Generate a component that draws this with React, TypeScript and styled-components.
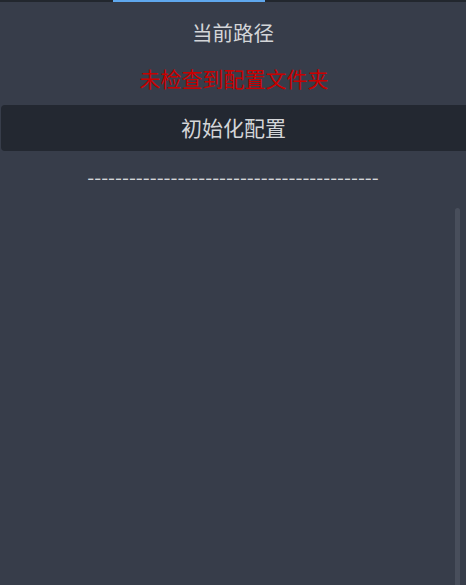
import React from "react";
import styled, { createGlobalStyle } from "styled-components";

const Global = createGlobalStyle`
  html, body { margin: 0; padding: 0; background: #373d4a; }
  body { font-family: "Noto Sans CJK SC", "Noto Sans", sans-serif; overflow: hidden; }
`;

const Page = styled.div`
  width: 466px;
  height: 585px;
  display: flex;
  flex-direction: column;
  background: #373d4a;
  position: relative;
  overflow: hidden;
`;

const TopStrip = styled.div`
  height: 2px;
  background: #22272e;
  display: flex;
  padding-left: 113px;
`;

const ActiveTab = styled.div`
  width: 152px;
  height: 2px;
  background: #5fa8ee;
`;

const Title = styled.div`
  margin-top: 17px;
  text-align: center;
  font-size: 20.5px;
  line-height: 26px;
  color: #d3d5d8;
`;

const Warning = styled.div`
  margin-top: 20px;
  padding-left: 2px;
  text-align: center;
  font-size: 21px;
  line-height: 26px;
  color: #c80000;
`;

const InitButton = styled.button`
  margin: 14px 0 0 1px;
  width: 470px;
  height: 46px;
  border: none;
  border-radius: 4px;
  background: #232831;
  color: #d3d5d8;
  font-family: inherit;
  font-size: 21px;
  line-height: 26px;
  padding: 0 5px 2px 0;
  text-align: center;
  box-sizing: border-box;
`;

const Divider = styled.div`
  margin-top: 13px;
  text-align: center;
  font-size: 20px;
  line-height: 26px;
  color: #d3d5d8;
`;

const ScrollThumb = styled.div`
  position: absolute;
  left: 455px;
  top: 208px;
  width: 5px;
  bottom: 0;
  border-radius: 3px 3px 0 0;
  background: #484e5b;
`;

export default function App() {
  return (
    <Page>
      <Global />
      <TopStrip>
        <ActiveTab />
      </TopStrip>
      <Title>当前路径</Title>
      <Warning>未检查到配置文件夹</Warning>
      <InitButton>初始化配置</InitButton>
      <Divider>{"-".repeat(42)}</Divider>
      <ScrollThumb />
    </Page>
  );
}
